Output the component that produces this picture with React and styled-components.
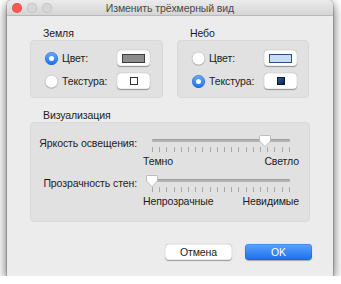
import React from 'react'
import styled, { createGlobalStyle } from 'styled-components'

const GlobalStyle = createGlobalStyle`
  html, body {
    margin: 0;
    padding: 0;
    background: #ffffff;
  }
  body {
    font-family: "Liberation Sans", Arial, sans-serif;
    font-size: 10.5px;
    letter-spacing: -0.1px;
    color: #1c1c1c;
  }
`

const Window = styled.div`
  margin-left: 7px;
  width: 326px;
  height: 276px;
  background: #ececec;
  border-radius: 5px 5px 0 0;
  box-shadow: 0 4px 12px rgba(0, 0, 0, 0.7), 0 0 0 1px rgba(0, 0, 0, 0.15);
  display: flex;
  flex-direction: column;
  overflow: hidden;
`

const TitleBar = styled.div`
  height: 15px;
  flex: none;
  display: grid;
  grid-template-columns: 1fr auto 1fr;
  align-items: center;
  background: linear-gradient(#ebebeb, #d5d5d5);
  border-bottom: 1px solid #b9b9b9;
`

const Lights = styled.div`
  display: flex;
  gap: 5px;
  padding-left: 5px;
`

const Light = styled.span`
  width: 10px;
  height: 10px;
  border-radius: 50%;
  background: ${p => p.$color};
  box-shadow: inset 0 0 0 0.5px rgba(0, 0, 0, 0.15);
`

const Title = styled.div`
  font-size: 10.5px;
  letter-spacing: -0.1px;
  color: #4a4a4a;
  white-space: nowrap;
`

const Content = styled.div`
  padding: 10px 23px 0;
  display: flex;
  flex-direction: column;
`

const Columns = styled.div`
  display: grid;
  grid-template-columns: 133px 132px;
  column-gap: 14px;
`

const SectionLabel = styled.div`
  height: 14px;
  line-height: 14px;
  padding-left: 13px;
  margin-top: ${p => p.$top || 0}px;
`

const Group = styled.div`
  background: #e1e1e1;
  border: 1px solid #d9d9d9;
  border-radius: 4px;
  box-sizing: border-box;
`

const RadioGroup = styled(Group)`
  height: 58px;
  padding: 9px 0 0 14px;
  display: flex;
  flex-direction: column;
  gap: 7px;
`

const RadioRow = styled.div`
  display: flex;
  align-items: center;
  height: 16px;
`

const RadioLabel = styled.label`
  width: 72px;
  display: flex;
  align-items: center;
  gap: 4px;
`

const RadioDot = styled.span`
  width: 13px;
  height: 13px;
  border-radius: 50%;
  box-sizing: border-box;
  display: flex;
  align-items: center;
  justify-content: center;
  background: ${p => (p.$on ? 'linear-gradient(#67a9fb, #1a72f0)' : '#fff')};
  box-shadow: ${p =>
    p.$on
      ? 'inset 0 0 0 0.5px rgba(0,40,140,0.4)'
      : '0 0.5px 1px rgba(0,0,0,0.35), inset 0 0 0 0.5px rgba(0,0,0,0.2)'};
  &::after {
    content: '';
    width: 5px;
    height: 5px;
    border-radius: 50%;
    background: #fff;
    display: ${p => (p.$on ? 'block' : 'none')};
  }
`

const Well = styled.div`
  width: 33px;
  height: 16px;
  background: #fff;
  border-radius: 4px;
  box-shadow: 0 0.5px 1px rgba(0, 0, 0, 0.35), inset 0 0 0 0.5px rgba(0, 0, 0, 0.12);
  display: flex;
  align-items: center;
  justify-content: center;
`

const Swatch = styled.span`
  box-sizing: border-box;
  width: ${p => (p.$square ? 8 : 23)}px;
  height: ${p => (p.$square ? 8 : 9)}px;
  background: ${p => p.$fill};
  border: 1px solid ${p => p.$edge};
`

const SliderGroup = styled(Group)`
  height: 100px;
  padding-top: 11px;
  display: flex;
  flex-direction: column;
  gap: 6px;
`

const SliderRow = styled.div`
  display: grid;
  grid-template-columns: 106px 156px;
  column-gap: 6px;
`

const SliderName = styled.div`
  text-align: right;
  line-height: 14px;
  margin-top: 2px;
  white-space: nowrap;
`

const SliderBlock = styled.div`
  display: flex;
  flex-direction: column;
`

const TrackArea = styled.div`
  position: relative;
  height: 12px;
  margin: 0 9px;
  display: flex;
  align-items: center;
`

const Track = styled.div`
  width: 100%;
  height: 3px;
  border-radius: 2px;
  background: #b3b3b3;
  box-shadow: inset 0 1px 0 #9e9e9e;
`

const Thumb = styled.svg`
  position: absolute;
  top: 1px;
  width: 12px;
  height: 12px;
  margin-left: -6px;
  overflow: visible;
`

const Ticks = styled.div`
  margin: 1px 9px 0;
  height: 5px;
  display: flex;
  justify-content: space-between;
`

const Tick = styled.span`
  width: 1px;
  height: 5px;
  background: #a8a8a8;
`

const Ends = styled.div`
  margin-top: 3px;
  display: flex;
  justify-content: space-between;
  line-height: 13px;
  white-space: nowrap;
`

const Buttons = styled.div`
  margin: 22px -2px 0 0;
  display: flex;
  justify-content: flex-end;
  gap: 13px;
`

const Button = styled.button`
  width: 67px;
  height: 16px;
  padding: 0;
  border: none;
  border-radius: 4px;
  font: inherit;
  letter-spacing: inherit;
  line-height: 16px;
  color: ${p => (p.$primary ? '#fff' : '#1c1c1c')};
  background: ${p => (p.$primary ? 'linear-gradient(#5ca3f9, #1b6ff0)' : '#fff')};
  box-shadow: ${p =>
    p.$primary
      ? '0 0.5px 1px rgba(0,0,0,0.3), inset 0 0 0 0.5px rgba(0,50,160,0.35)'
      : '0 0.5px 1px rgba(0,0,0,0.35), inset 0 0 0 0.5px rgba(0,0,0,0.15)'};
`

const Radio = ({ on, children }) => (
  <RadioLabel>
    <RadioDot $on={on} />
    {children}
  </RadioLabel>
)

const Slider = ({ name, value, low, high }) => (
  <SliderRow>
    <SliderName>{name}</SliderName>
    <SliderBlock>
      <TrackArea>
        <Track />
        <Thumb viewBox="0 0 12 12" style={{ left: `${value * 100}%` }}>
          <path
            d="M1.5 0.5 H10.5 Q11.5 0.5 11.5 1.5 V6 L6 11.5 L0.5 6 V1.5 Q0.5 0.5 1.5 0.5 Z"
            fill="#fff"
            stroke="#b0b0b0"
            strokeWidth="0.8"
          />
        </Thumb>
      </TrackArea>
      <Ticks>
        {Array.from({ length: 20 }).map((_, i) => (
          <Tick key={i} />
        ))}
      </Ticks>
      <Ends>
        <span>{low}</span>
        <span>{high}</span>
      </Ends>
    </SliderBlock>
  </SliderRow>
)

export default function App() {
  return (
    <>
      <GlobalStyle />
      <Window>
        <TitleBar>
          <Lights>
            <Light $color="#fc5753" />
            <Light $color="#d6d6d6" />
            <Light $color="#d6d6d6" />
          </Lights>
          <Title>Изменить трёхмерный вид</Title>
          <div />
        </TitleBar>
        <Content>
          <Columns>
            <div>
              <SectionLabel>Земля</SectionLabel>
              <RadioGroup>
                <RadioRow>
                  <Radio on>Цвет:</Radio>
                  <Well>
                    <Swatch $fill="#8c8c8c" $edge="#3c3c3c" />
                  </Well>
                </RadioRow>
                <RadioRow>
                  <Radio>Текстура:</Radio>
                  <Well>
                    <Swatch $square $fill="#fff" $edge="#333" />
                  </Well>
                </RadioRow>
              </RadioGroup>
            </div>
            <div>
              <SectionLabel>Небо</SectionLabel>
              <RadioGroup>
                <RadioRow>
                  <Radio>Цвет:</Radio>
                  <Well>
                    <Swatch $fill="#c7ddf7" $edge="#2d4f86" />
                  </Well>
                </RadioRow>
                <RadioRow>
                  <Radio on>Текстура:</Radio>
                  <Well>
                    <Swatch $square $fill="linear-gradient(135deg, #2e5fa8, #0b1d4d)" $edge="#0d1a33" />
                  </Well>
                </RadioRow>
              </RadioGroup>
            </div>
          </Columns>
          <SectionLabel $top={10}>Визуализация</SectionLabel>
          <SliderGroup>
            <Slider name="Яркость освещения:" value={0.82} low="Темно" high="Светло" />
            <Slider name="Прозрачность стен:" value={0} low="Непрозрачные" high="Невидимые" />
          </SliderGroup>
          <Buttons>
            <Button>Отмена</Button>
            <Button $primary>OK</Button>
          </Buttons>
        </Content>
      </Window>
    </>
  )
}
